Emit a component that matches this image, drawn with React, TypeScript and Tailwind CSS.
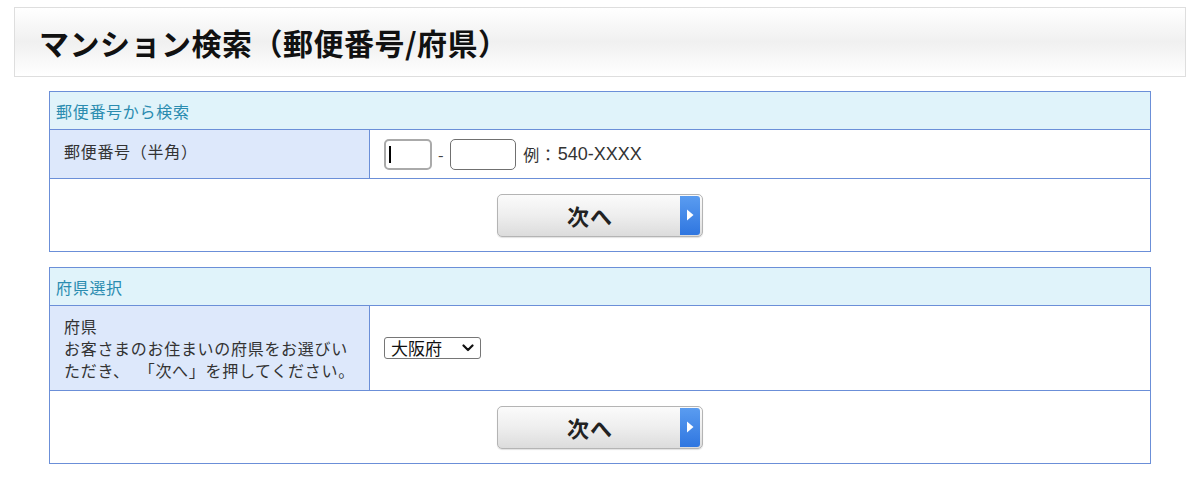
const font = { fontFamily: '"Noto Sans CJK JP", "Noto Sans", sans-serif' };

function NextButton() {
  return (
    <button
      type="button"
      className="flex h-[43px] w-[206px] overflow-hidden rounded-[5px] border border-[#b4b4b4] bg-gradient-to-b from-[#fbfbfb] via-[#eeeeee] to-[#dcdcdc] shadow-[0_1px_1px_rgba(0,0,0,0.12)]"
    >
      <span className="flex flex-1 items-center justify-center pl-[2px] text-[22px] font-bold tracking-[1px] text-[#222]">
        次へ
      </span>
      <span className="mr-[2px] my-[1px] flex w-[20px] items-center justify-center rounded-r-[3px] bg-gradient-to-b from-[#5a9cf0] to-[#2f76e0]">
        <svg width="8" height="12" viewBox="0 0 8 12" aria-hidden>
          <path d="M1 0.5 L7.5 6 L1 11.5 Z" fill="#fff" />
        </svg>
      </span>
    </button>
  );
}

function Section({
  title,
  label,
  rowH,
  children,
}: {
  title: string;
  label: React.ReactNode;
  rowH: string;
  children: React.ReactNode;
}) {
  return (
    <table className="w-[1102px] border-collapse text-[16px] leading-[22px] tracking-[0.7px]">
      <tbody>
        <tr className="h-[38px]">
          <td colSpan={2} className="border border-[#6b8fd8] bg-[#e0f3fa] px-[6px] text-[#2a8cb0]">
            {title}
          </td>
        </tr>
        <tr className={rowH}>
          <td className="w-[320px] border border-[#6b8fd8] bg-[#dde8fb] px-[14px] align-middle text-[#333]">
            {label}
          </td>
          <td className="border border-[#6b8fd8] bg-white px-[14px] align-middle text-[#333]">
            {children}
          </td>
        </tr>
        <tr className="h-[73px]">
          <td colSpan={2} className="border border-[#6b8fd8] bg-white">
            <div className="flex justify-center">
              <NextButton />
            </div>
          </td>
        </tr>
      </tbody>
    </table>
  );
}

export default function App() {
  return (
    <div className="min-h-[477px] w-[1200px] bg-white pt-[7px]" style={font}>
      <div className="mx-[14px] flex h-[70px] items-center border border-[#dedede] bg-gradient-to-b from-white via-[#f0f0f0] to-white px-[24px]">
        <h1 className="text-[30px] font-bold tracking-[0.5px] text-[#111]">
          マンション検索（郵便番号/府県）
        </h1>
      </div>

      <div className="mt-[14px] flex flex-col gap-[15px] pl-[49px]">
        <Section
          title="郵便番号から検索"
          rowH="h-[49px]"
          label={<div className="-mt-[6px]">郵便番号（半角）</div>}
        >
          <div className="flex items-center">
            <div className="flex h-[31px] w-[48px] items-center rounded-[5px] border-2 border-[#aaaaaa] pl-[3px]">
              <span className="h-[17px] w-[1.5px] bg-black" />
            </div>
            <span className="mx-[6px] text-[#444]">-</span>
            <div className="h-[31px] w-[66px] rounded-[5px] border border-[#707070]" />
            <span className="ml-[7px] text-[#333]">例：</span>
            <span
              className="ml-[1px] text-[18px] tracking-normal text-[#333]"
              style={{ fontFamily: '"Liberation Sans", sans-serif' }}
            >
              540-XXXX
            </span>
          </div>
        </Section>

        <Section
          title="府県選択"
          rowH="h-[85px]"
          label={
            <div className="leading-[22px]">
              府県
              <br />
              お客さまのお住まいの府県をお選びい
              <br />
              ただき、<span className="inline-block w-[9px]" />「次へ」を押してください。
            </div>
          }
        >
          <div className="flex h-[22px] w-[97px] items-center justify-between rounded-[3px] border border-[#767676] bg-white pl-[6px] pr-[6px] text-[17px] tracking-normal text-[#111]">
            <span>大阪府</span>
            <svg width="12" height="8" viewBox="0 0 12 8" aria-hidden>
              <path d="M1.5 1.5 L6 6 L10.5 1.5" fill="none" stroke="#111" strokeWidth="2.2" strokeLinecap="round" strokeLinejoin="round" />
            </svg>
          </div>
        </Section>
      </div>
    </div>
  );
}
